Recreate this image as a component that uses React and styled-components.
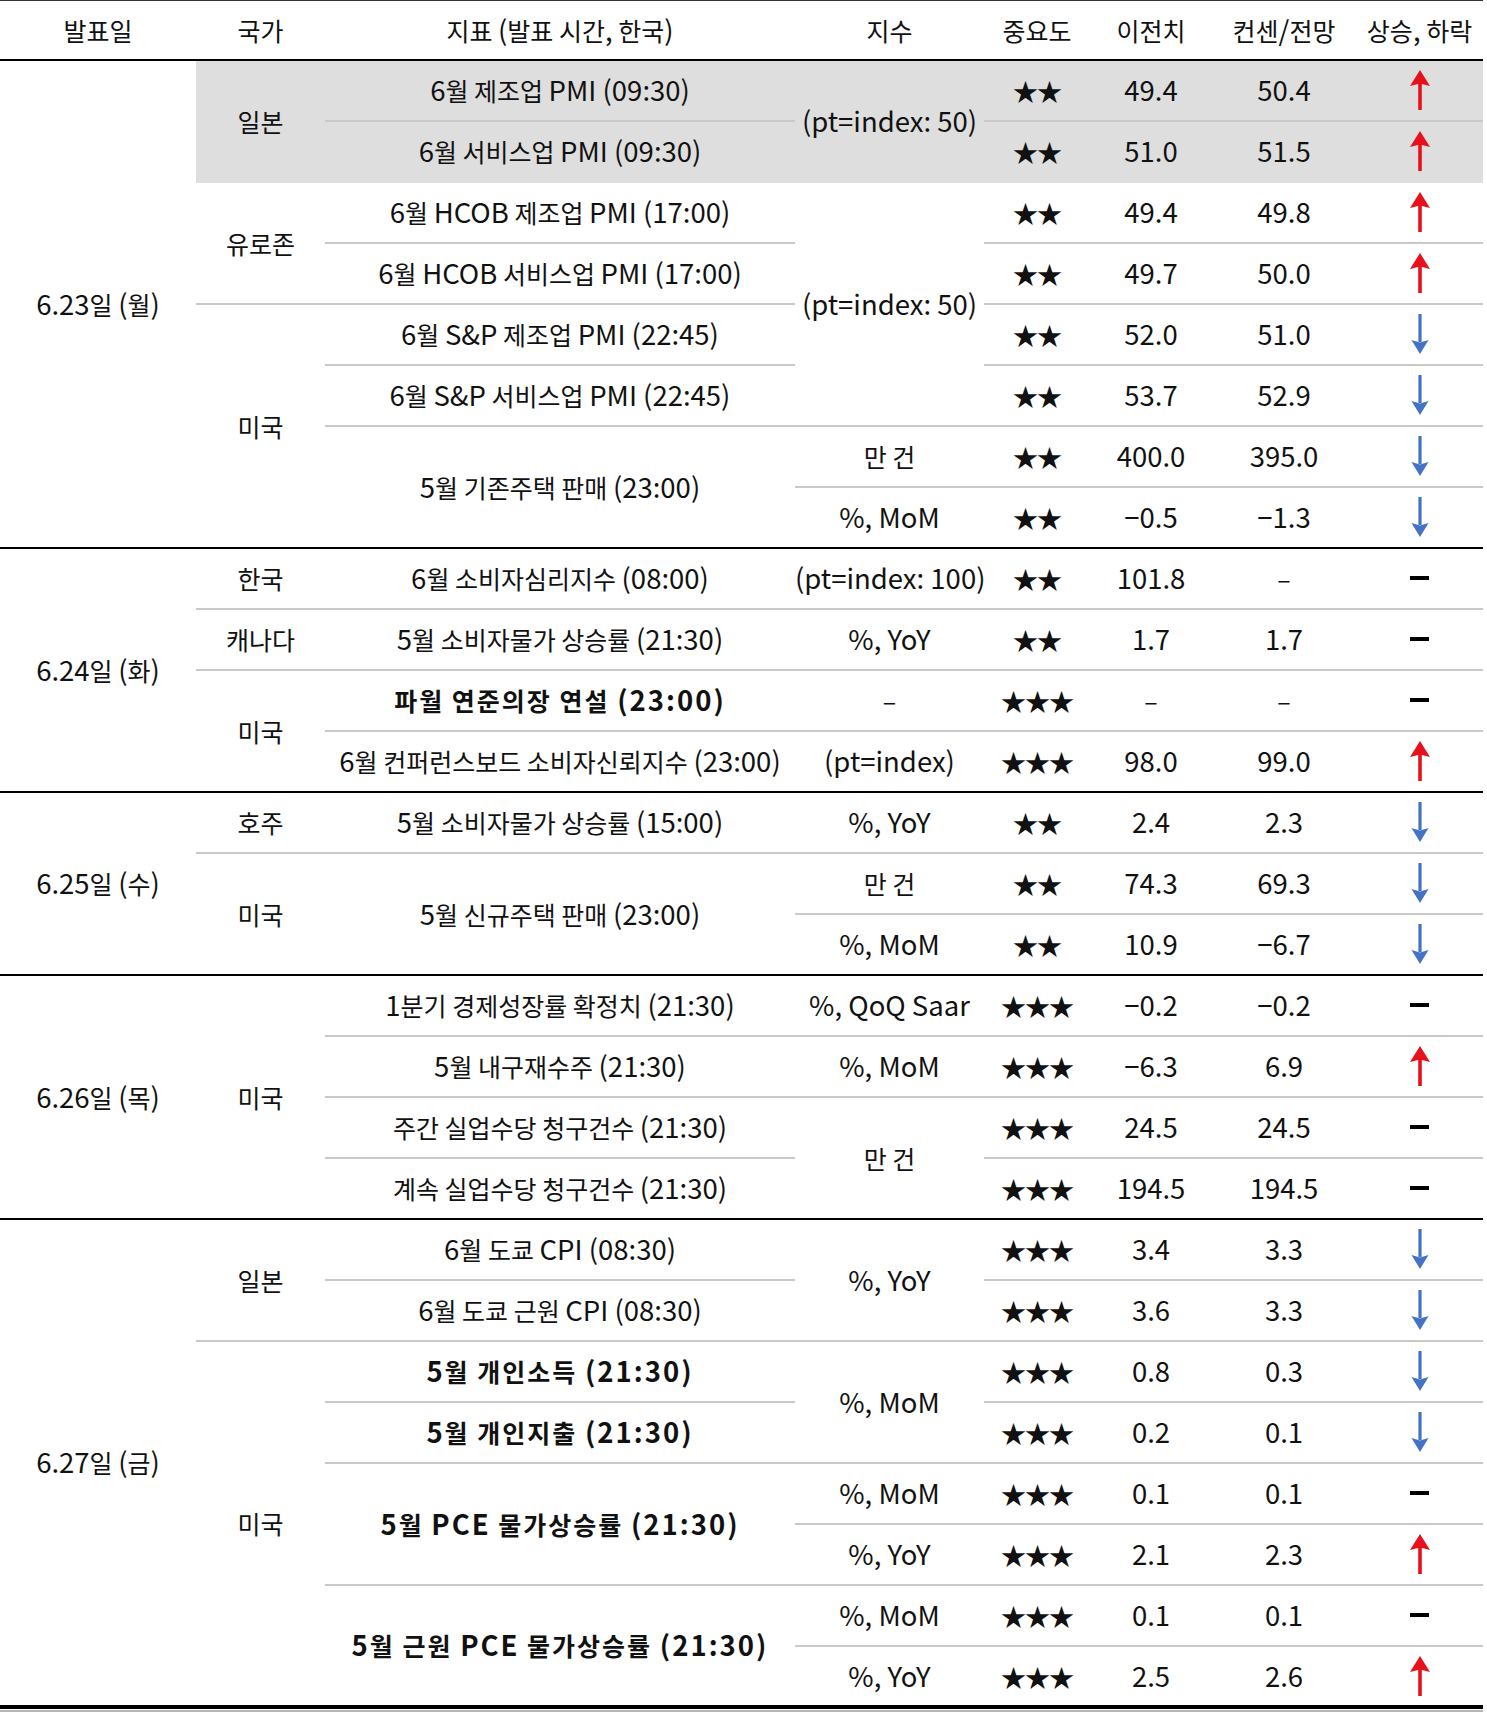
import React from "react";
import styled, { createGlobalStyle } from "styled-components";

const GlobalStyle = createGlobalStyle`
  body {
    margin: 0;
    background: #fff;
    color: #111;
    font-family: "Noto Sans CJK KR", "Noto Sans", sans-serif;
  }
`;

const columns = [196, 129, 470, 189, 106, 122, 144, 127];
const headers = ["발표일", "국가", "지표 (발표 시간, 한국)", "지수", "중요도", "이전치", "컨센/전망", "상승, 하락"];

// each row: country / name / unit are [text, rowSpan] when the cell starts on that row
const groups = [
  {
    date: "6.23일 (월)",
    rows: [
      { country: ["일본", 2], name: ["6월 제조업 PMI (09:30)", 1], unit: ["(pt=index: 50)", 2], imp: "★★", prev: "49.4", cons: "50.4", trend: "up", shade: true },
      { name: ["6월 서비스업 PMI (09:30)", 1], imp: "★★", prev: "51.0", cons: "51.5", trend: "up", shade: true },
      { country: ["유로존", 2], name: ["6월 HCOB 제조업 PMI (17:00)", 1], unit: ["(pt=index: 50)", 4], imp: "★★", prev: "49.4", cons: "49.8", trend: "up" },
      { name: ["6월 HCOB 서비스업 PMI (17:00)", 1], imp: "★★", prev: "49.7", cons: "50.0", trend: "up" },
      { country: ["미국", 4], name: ["6월 S&P 제조업 PMI (22:45)", 1], imp: "★★", prev: "52.0", cons: "51.0", trend: "down" },
      { name: ["6월 S&P 서비스업 PMI (22:45)", 1], imp: "★★", prev: "53.7", cons: "52.9", trend: "down" },
      { name: ["5월 기존주택 판매 (23:00)", 2], unit: ["만 건", 1], imp: "★★", prev: "400.0", cons: "395.0", trend: "down" },
      { unit: ["%, MoM", 1], imp: "★★", prev: "−0.5", cons: "−1.3", trend: "down" },
    ],
  },
  {
    date: "6.24일 (화)",
    rows: [
      { country: ["한국", 1], name: ["6월 소비자심리지수 (08:00)", 1], unit: ["(pt=index: 100)", 1], imp: "★★", prev: "101.8", cons: "–", trend: "flat" },
      { country: ["캐나다", 1], name: ["5월 소비자물가 상승률 (21:30)", 1], unit: ["%, YoY", 1], imp: "★★", prev: "1.7", cons: "1.7", trend: "flat" },
      { country: ["미국", 2], name: ["파월 연준의장 연설 (23:00)", 1, true], unit: ["–", 1], imp: "★★★", prev: "–", cons: "–", trend: "flat" },
      { name: ["6월 컨퍼런스보드 소비자신뢰지수 (23:00)", 1], unit: ["(pt=index)", 1], imp: "★★★", prev: "98.0", cons: "99.0", trend: "up" },
    ],
  },
  {
    date: "6.25일 (수)",
    rows: [
      { country: ["호주", 1], name: ["5월 소비자물가 상승률 (15:00)", 1], unit: ["%, YoY", 1], imp: "★★", prev: "2.4", cons: "2.3", trend: "down" },
      { country: ["미국", 2], name: ["5월 신규주택 판매 (23:00)", 2], unit: ["만 건", 1], imp: "★★", prev: "74.3", cons: "69.3", trend: "down" },
      { unit: ["%, MoM", 1], imp: "★★", prev: "10.9", cons: "−6.7", trend: "down" },
    ],
  },
  {
    date: "6.26일 (목)",
    rows: [
      { country: ["미국", 4], name: ["1분기 경제성장률 확정치 (21:30)", 1], unit: ["%, QoQ Saar", 1], imp: "★★★", prev: "−0.2", cons: "−0.2", trend: "flat" },
      { name: ["5월 내구재수주 (21:30)", 1], unit: ["%, MoM", 1], imp: "★★★", prev: "−6.3", cons: "6.9", trend: "up" },
      { name: ["주간 실업수당 청구건수 (21:30)", 1], unit: ["만 건", 2], imp: "★★★", prev: "24.5", cons: "24.5", trend: "flat" },
      { name: ["계속 실업수당 청구건수 (21:30)", 1], imp: "★★★", prev: "194.5", cons: "194.5", trend: "flat" },
    ],
  },
  {
    date: "6.27일 (금)",
    rows: [
      { country: ["일본", 2], name: ["6월 도쿄 CPI (08:30)", 1], unit: ["%, YoY", 2], imp: "★★★", prev: "3.4", cons: "3.3", trend: "down" },
      { name: ["6월 도쿄 근원 CPI (08:30)", 1], imp: "★★★", prev: "3.6", cons: "3.3", trend: "down" },
      { country: ["미국", 6], name: ["5월 개인소득 (21:30)", 1, true], unit: ["%, MoM", 2], imp: "★★★", prev: "0.8", cons: "0.3", trend: "down" },
      { name: ["5월 개인지출 (21:30)", 1, true], imp: "★★★", prev: "0.2", cons: "0.1", trend: "down" },
      { name: ["5월 PCE 물가상승률 (21:30)", 2, true], unit: ["%, MoM", 1], imp: "★★★", prev: "0.1", cons: "0.1", trend: "flat" },
      { unit: ["%, YoY", 1], imp: "★★★", prev: "2.1", cons: "2.3", trend: "up" },
      { name: ["5월 근원 PCE 물가상승률 (21:30)", 2, true], unit: ["%, MoM", 1], imp: "★★★", prev: "0.1", cons: "0.1", trend: "flat" },
      { unit: ["%, YoY", 1], imp: "★★★", prev: "2.5", cons: "2.6", trend: "up" },
    ],
  },
];

// latin letters and digits sit a bit larger than hangul in the source sheet
const LATIN_RUN = /([A-Za-z0-9().,:=%&/−-]+(?: +[A-Za-z0-9().,:=%&/−-]+)*)/;

const Text = ({ children }) =>
  children.split(LATIN_RUN).map((part, i) =>
    i % 2 === 1 ? <Latin key={i}>{part}</Latin> : part
  );

const Trend = ({ dir }) => {
  if (dir === "flat") return <FlatMark />;
  if (dir === "up") {
    return (
      <ArrowIcon width="24" height="42" viewBox="0 0 24 42">
        <path d="M12 1 L22 17 L12 14.5 L2 17 Z" fill="#e8101a" />
        <rect x="10.2" y="13" width="3.6" height="28" fill="#e8101a" />
      </ArrowIcon>
    );
  }
  return (
    <ArrowIcon width="24" height="42" viewBox="0 0 24 42">
      <rect x="10.4" y="1" width="3.2" height="28" fill="#4472c4" />
      <path d="M12 41 L20.5 27 L12 29.5 L3.5 27 Z" fill="#4472c4" />
    </ArrowIcon>
  );
};

const App = () => {
  return (
    <Page>
      <GlobalStyle />
      <Table>
        <colgroup>
          {columns.map((w, i) => (
            <col key={i} style={{ width: w }} />
          ))}
        </colgroup>
        <thead>
          <HeadRow>
            {headers.map((h) => (
              <HeadCell key={h}>
                <Text>{h}</Text>
              </HeadCell>
            ))}
          </HeadRow>
        </thead>
        <tbody>
          {groups.map((group, gi) => {
            const last = group.rows.length - 1;
            const finalGroup = gi === groups.length - 1;
            // bottom line of a cell that starts on row r and spans n rows
            const line = (r, n, shade) => {
              const endRow = r + n - 1;
              if (endRow === last) return finalGroup ? "end" : "group";
              if (shade && !group.rows[endRow + 1].shade) return "band";
              return "row";
            };
            return group.rows.map((row, ri) => (
              <BodyRow key={`${gi}-${ri}`}>
                {ri === 0 && (
                  <Cell rowSpan={group.rows.length} $line={finalGroup ? "end" : "group"}>
                    <Text>{group.date}</Text>
                  </Cell>
                )}
                {row.country && (
                  <Cell rowSpan={row.country[1]} $shade={row.shade} $line={line(ri, row.country[1], row.shade)}>
                    {row.country[0]}
                  </Cell>
                )}
                {row.name && (
                  <Cell
                    rowSpan={row.name[1]}
                    $shade={row.shade}
                    $bold={row.name[2]}
                    $line={line(ri, row.name[1], row.shade)}
                  >
                    <Text>{row.name[0]}</Text>
                  </Cell>
                )}
                {row.unit && (
                  <Cell rowSpan={row.unit[1]} $shade={row.shade} $line={line(ri, row.unit[1], row.shade)}>
                    <Text>{row.unit[0]}</Text>
                  </Cell>
                )}
                <Cell $shade={row.shade} $line={line(ri, 1, row.shade)}>
                  <Stars>{row.imp}</Stars>
                </Cell>
                <Cell $shade={row.shade} $line={line(ri, 1, row.shade)}>
                  <Text>{row.prev}</Text>
                </Cell>
                <Cell $shade={row.shade} $line={line(ri, 1, row.shade)}>
                  <Text>{row.cons}</Text>
                </Cell>
                <Cell $shade={row.shade} $line={line(ri, 1, row.shade)}>
                  <Trend dir={row.trend} />
                </Cell>
              </BodyRow>
            ));
          })}
        </tbody>
      </Table>
    </Page>
  );
};

export default App;

const lines = {
  row: "2px solid #c9c9c9",
  band: "2px solid #dedede",
  group: "2px solid #000",
  end: "4px solid #000",
};

const Page = styled.div`
  width: 1483px;
  padding-bottom: 1px;
  border-bottom: 2px solid #b5b5b5;
`;

const Table = styled.table`
  width: 1483px;
  border-collapse: collapse;
  table-layout: fixed;
  border-top: 1px solid #333;
`;

const HeadRow = styled.tr`
  height: 59px;
`;

const BodyRow = styled.tr`
  height: 61px;
`;

const HeadCell = styled.th`
  padding: 0;
  font-size: 25px;
  font-weight: 400;
  text-align: center;
  vertical-align: middle;
  white-space: nowrap;
  border-bottom: 2px solid #000;
`;

const Cell = styled.td`
  padding: 0;
  font-size: 25px;
  font-weight: ${(p) => (p.$bold ? 700 : 400)};
  letter-spacing: ${(p) => (p.$bold ? "2px" : "0")};
  text-align: center;
  vertical-align: middle;
  white-space: nowrap;
  background: ${(p) => (p.$shade ? "#dedede" : "transparent")};
  border-bottom: ${(p) => lines[p.$line]};
`;

const Latin = styled.span`
  font-size: 1.1em;
  line-height: 1;
`;

const Stars = styled.span`
  letter-spacing: -1px;
`;

const ArrowIcon = styled.svg`
  display: block;
  margin: 0 auto;
`;

const FlatMark = styled.span`
  display: block;
  width: 19px;
  height: 4px;
  margin: 0 auto;
  background: #000;
`;
